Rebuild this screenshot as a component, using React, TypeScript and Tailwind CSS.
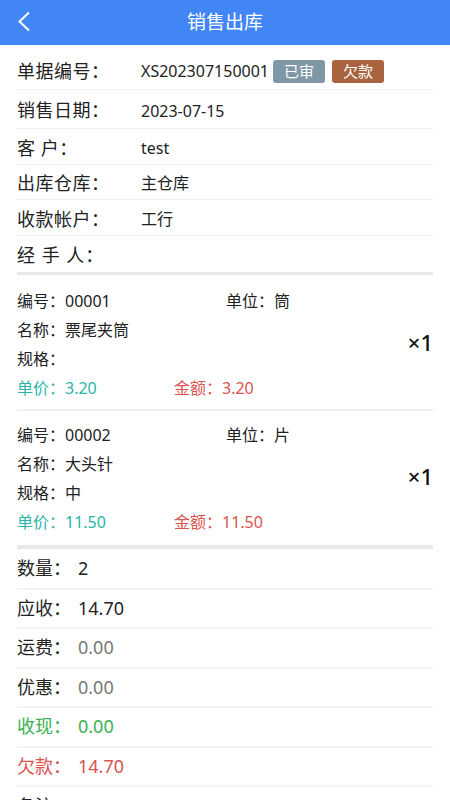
const font = "font-['Noto_Sans','Noto_Sans_CJK_SC',sans-serif]";

const info = [
  { k: "单据编号：", v: "XS202307150001", h: "h-[45px] pt-[8px]", badges: true },
  { k: "销售日期：", v: "2023-07-15", h: "h-[39px] pt-[3px]" },
  { k: "客 户：", v: "test", h: "h-[36px] pt-[3px]" },
  { k: "出库仓库：", v: "主仓库", h: "h-[35px] pt-[2px]" },
  { k: "收款帐户：", v: "工行", h: "h-[36px] pt-[3px]" },
];

const items = [
  { no: "00001", unit: "筒", name: "票尾夹筒", spec: "", price: "3.20", amount: "3.20", qty: 1 },
  { no: "00002", unit: "片", name: "大头针", spec: "中", price: "11.50", amount: "11.50", qty: 1 },
];

const totals = [
  { k: "数量：", v: "2", kc: "text-[#222]", vc: "text-[#222]" },
  { k: "应收：", v: "14.70", kc: "text-[#222]", vc: "text-[#222]" },
  { k: "运费：", v: "0.00", kc: "text-[#222]", vc: "text-[#777]" },
  { k: "优惠：", v: "0.00", kc: "text-[#222]", vc: "text-[#777]" },
  { k: "收现：", v: "0.00", kc: "text-[#3cb054]", vc: "text-[#3cb054]" },
  { k: "欠款：", v: "14.70", kc: "text-[#d9534f]", vc: "text-[#d9534f]" },
];

export default function App() {
  return (
    <div className={`w-[450px] h-[800px] overflow-hidden bg-white ${font}`}>
      {/* Header */}
      <div className="h-[45px] bg-[#4286f5] flex items-center relative">
        <svg className="absolute left-[17px] top-[11px]" width="14" height="21" viewBox="0 0 14 21" fill="none">
          <path d="M12 1.5 L2.5 10.5 L12 19.5" stroke="white" strokeWidth="2" />
        </svg>
        <div className="flex-1 text-center text-white text-[19px] leading-none">销售出库</div>
      </div>

      <div className="px-[17px]">
        {info.map((r) => (
          <div key={r.k} className={`${r.h} flex items-center border-b border-[#efefef]`}>
            <div className="w-[124px] text-[18px] text-[#222] tracking-[0.5px]">{r.k}</div>
            <div className="text-[16px] text-[#222]">{r.v}</div>
            {r.badges && (
              <div className="flex gap-[7px] ml-[4px]">
                <span className="w-[52px] h-[23px] rounded-[3px] bg-[#8098a6] text-white text-[15px] flex items-center justify-center">已审</span>
                <span className="w-[52px] h-[23px] rounded-[3px] bg-[#a9643f] text-white text-[15px] flex items-center justify-center">欠款</span>
              </div>
            )}
          </div>
        ))}
        <div className="h-[36px] flex items-center pt-[2px]">
          <div className="text-[18px] text-[#222] tracking-[1px]">经 手 人：</div>
        </div>
        <div className="h-[3px] bg-[#e8e8e8]" />

        {items.map((it, i) => (
          <div key={it.no} className={`flex items-center ${i === 0 ? "pt-[11px] pb-[7px] border-b-2 border-[#f0f0f0]" : "pt-[9px] pb-[9px]"}`}>
            <div className="flex-1 text-[16px] text-[#222]">
              <div className="h-[29px] flex items-center">
                <span className="w-[209px]">编号：{it.no}</span>
                <span>单位：{it.unit}</span>
              </div>
              <div className="h-[29px] flex items-center">名称：{it.name}</div>
              <div className="h-[29px] flex items-center">规格：{it.spec}</div>
              <div className="h-[29px] flex items-center">
                <span className="w-[157px] text-[#2ab5a8]">单价：{it.price}</span>
                <span className="text-[#d9534f]">金额：{it.amount}</span>
              </div>
            </div>
            <div className="text-[22px] text-[#111] font-medium mb-[4px]">×{it.qty}</div>
          </div>
        ))}
        <div className="h-[4px] bg-[#e8e8e8]" />

        <div className="pt-[1px]">
          {totals.map((t) => (
            <div key={t.k} className="h-[39.5px] flex items-center border-b-2 border-[#f3f3f3] text-[18px]">
              <span className={`w-[61px] ${t.kc}`}>{t.k}</span>
              <span className={t.vc}>{t.v}</span>
            </div>
          ))}
          <div className="h-[39px] flex items-center text-[18px] text-[#222]">备注：</div>
        </div>
      </div>
    </div>
  );
}
